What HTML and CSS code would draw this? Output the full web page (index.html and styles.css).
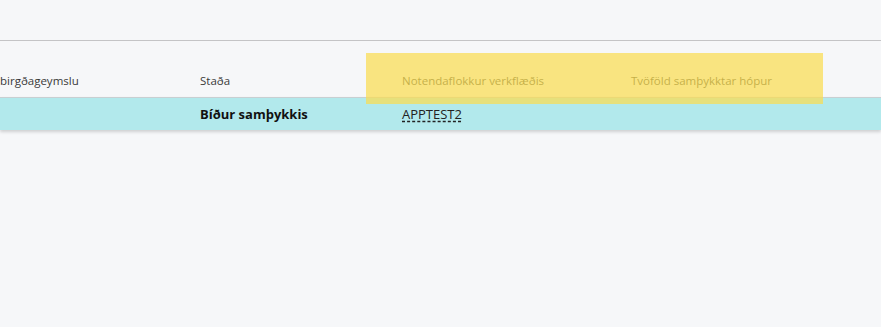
FILE: index.html
```html
<!DOCTYPE html>
<html>
<head>
<meta charset="utf-8">
<link rel="stylesheet" href="styles.css">
</head>
<body>
<div class="page">
  <div class="topbar"></div>
  <div class="grid">
    <div class="row head">
      <div class="cell c1">birgðageymslu</div>
      <div class="cell c2">Staða</div>
      <div class="cell c3">Notendaflokkur verkflæðis</div>
      <div class="cell c4">Tvöföld samþykktar hópur</div>
    </div>
    <div class="row data">
      <div class="cell c1"></div>
      <div class="cell c2"><strong>Bíður samþykkis</strong></div>
      <div class="cell c3"><span class="link">APPTEST2</span></div>
      <div class="cell c4"></div>
    </div>
    <div class="highlight"></div>
  </div>
</div>
</body>
</html>
```
FILE: styles.css
```css
html, body {
  margin: 0;
  padding: 0;
  background: #f6f7f9;
  overflow: hidden;
}
body {
  width: 881px;
  height: 327px;
  font-family: "Open Sans", "Noto Sans", sans-serif;
  color: #333;
}
.topbar {
  height: 40px;
  border-bottom: 1px solid #c4c4c6;
}
.grid {
  position: relative;
}
.row {
  display: grid;
  grid-template-columns: 200px 202px 229px 1fr;
}
.head {
  height: 56px;
  align-items: end;
}
.head .cell {
  font-size: 11.5px;
  color: #3a3a3a;
  padding-bottom: 8px;
  line-height: 16px;
}
.data {
  height: 32px;
  background: #b2e9ec;
  border-top: 1px solid #c8cfd2;
  box-shadow: 0 2px 3px rgba(0,0,0,0.16);
  align-items: center;
}
.data .cell {
  font-size: 13px;
  color: #111;
}
.data strong {
  font-weight: 700;
}
.link {
  text-decoration: underline dashed #222;
  text-underline-offset: 2px;
  color: #222;
}
.highlight {
  position: absolute;
  left: 366px;
  top: 12px;
  width: 457px;
  height: 51px;
  background: rgba(250, 220, 80, 0.72);
}
```
